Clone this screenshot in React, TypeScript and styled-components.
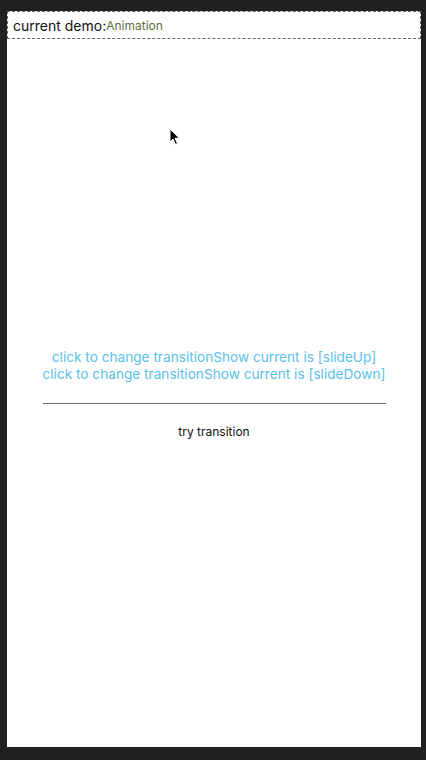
import React from 'react';
import styled, { createGlobalStyle } from 'styled-components';

const GlobalStyle = createGlobalStyle`
  html, body {
    margin: 0;
    padding: 0;
    background: #212121;
  }
  body {
    font-family: Inter, Roboto, "Liberation Sans", sans-serif;
  }
`;

const Page = styled.div`
  padding: 11px 5px 13px 7px;
  height: 760px;
  box-sizing: border-box;
  display: flex;
`;

const Panel = styled.div`
  flex: 1;
  background: #fff;
  display: flex;
  flex-direction: column;
  position: relative;
`;

const DemoHeader = styled.div`
  height: 28px;
  box-sizing: border-box;
  border: 1px dashed #666;
  display: flex;
  align-items: center;
  padding: 1px 5px 0;
  font-size: 14px;
  color: #111;
`;

const DemoName = styled.span`
  font-size: 12px;
  color: #5b6f3e;
`;

const Stage = styled.div`
  flex: 1;
  display: flex;
  align-items: center;
  justify-content: center;
  padding-top: 2px;
`;

const Group = styled.div`
  display: inline-flex;
  flex-direction: column;
  align-items: stretch;
  text-align: center;
`;

const Toggle = styled.div`
  font-size: 13.65px;
  line-height: 17px;
  color: #5bbfe9;
  cursor: pointer;
  white-space: nowrap;
`;

const Rule = styled.div`
  height: 1px;
  background: #6b6b6b;
  margin-top: 20px;
`;

const TryButton = styled.div`
  margin-top: 20px;
  font-size: 12px;
  line-height: 15px;
  color: #111;
`;

const Cursor = styled.svg`
  position: absolute;
  left: 162px;
  top: 117px;
`;

export default function App() {
  return (
    <>
      <GlobalStyle />
      <Page>
        <Panel>
          <DemoHeader>
            current demo:<DemoName>Animation</DemoName>
          </DemoHeader>
          <Stage>
            <Group>
              <Toggle>click to change transitionShow current is [slideUp]</Toggle>
              <Toggle>click to change transitionShow current is [slideDown]</Toggle>
              <Rule />
              <TryButton>try transition</TryButton>
            </Group>
          </Stage>
          <Cursor width="12" height="18" viewBox="0 0 12 18">
            <path d="M1 1 L1 14 L4 11 L6.5 16.5 L8.5 15.5 L6 10.2 L10.5 10.2 Z" fill="#000" stroke="#fff" strokeWidth="1" />
          </Cursor>
        </Panel>
      </Page>
    </>
  );
}
